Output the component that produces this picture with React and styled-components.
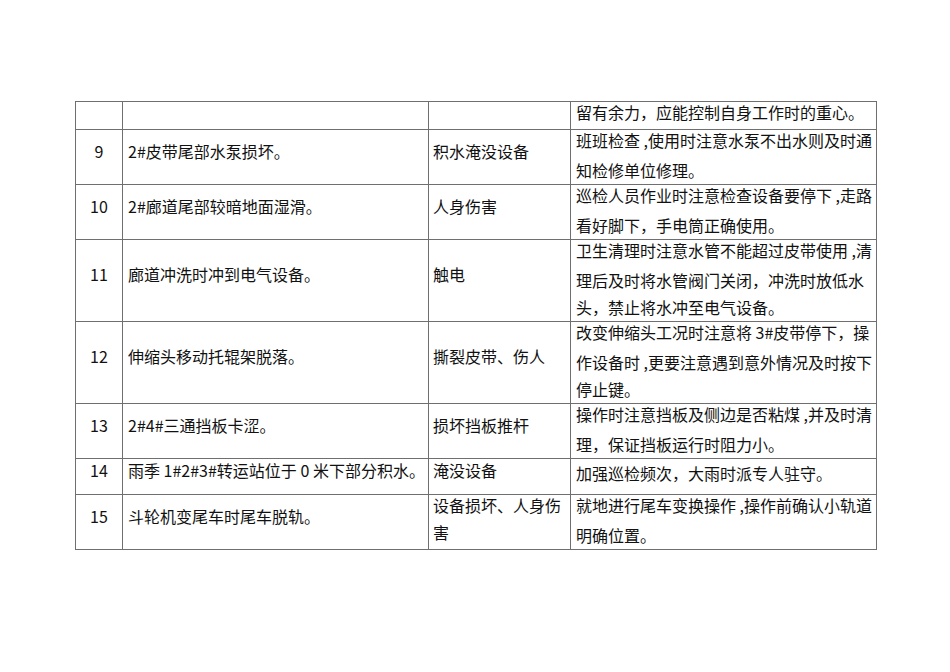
import styled, { createGlobalStyle } from "styled-components";

const GlobalStyle = createGlobalStyle`
    html, body {
        margin: 0;
        padding: 0;
        background: #fff;
    }
    body {
        font-family: "Noto Sans CJK SC", "Noto Sans", sans-serif;
        color: #111;
    }
`;

const Page = styled.div`
    width: 950px;
    height: 672px;
    padding: 101px 0 0 75px;
    box-sizing: border-box;
    background: #fff;
`;

const Table = styled.div`
    display: grid;
    grid-template-columns: 46px 305px 141px 305px;
    gap: 1px;
    padding: 1px;
    width: max-content;
    background: #6f6f6f;
`;

const Cell = styled.div`
    background: #fff;
    display: flex;
    flex-direction: column;
    justify-content: center;
    min-height: ${(p) => p.$minHeight || 0}px;
    padding: 0 ${(p) => (p.$num ? 0 : 2)}px 0 ${(p) => (p.$num ? 0 : p.$pad || 5)}px;
    align-items: ${(p) => (p.$num ? "center" : "stretch")};
`;

// glyphs sit a little high in the line, like the Word original
const Text = styled.div`
    font-size: 16px;
    line-height: 27px;
    white-space: nowrap;
    margin-top: -${(p) => p.$lift}px;
    padding-bottom: ${(p) => p.$lift}px;
`;

const rows = [
    { no: "", item: "", risk: [""], measure: ["留有余力，应能控制自身工作时的重心。"] },
    {
        no: "9",
        item: "2#皮带尾部水泵损坏。",
        risk: ["积水淹没设备"],
        measure: ["班班检查 ,使用时注意水泵不出水则及时通", "知检修单位修理。"],
    },
    {
        no: "10",
        item: "2#廊道尾部较暗地面湿滑。",
        risk: ["人身伤害"],
        measure: ["巡检人员作业时注意检查设备要停下 ,走路", "看好脚下，手电筒正确使用。"],
    },
    {
        no: "11",
        item: "廊道冲洗时冲到电气设备。",
        risk: ["触电"],
        measure: [
            "卫生清理时注意水管不能超过皮带使用 ,清",
            "理后及时将水管阀门关闭，冲洗时放低水",
            "头，禁止将水冲至电气设备。",
        ],
    },
    {
        no: "12",
        item: "伸缩头移动托辊架脱落。",
        risk: ["撕裂皮带、伤人"],
        measure: [
            "改变伸缩头工况时注意将 3#皮带停下，操",
            "作设备时 ,更要注意遇到意外情况及时按下",
            "停止键。",
        ],
    },
    {
        no: "13",
        item: "2#4#三通挡板卡涩。",
        risk: ["损坏挡板推杆"],
        measure: ["操作时注意挡板及侧边是否粘煤 ,并及时清", "理，保证挡板运行时阻力小。"],
    },
    {
        no: "14",
        item: "雨季 1#2#3#转运站位于 0 米下部分积水。",
        risk: ["淹没设备"],
        measure: ["加强巡检频次，大雨时派专人驻守。"],
        minHeight: 35,
    },
    {
        no: "15",
        item: "斗轮机变尾车时尾车脱轨。",
        risk: ["设备损坏、人身伤", "害"],
        measure: ["就地进行尾车变换操作 ,操作前确认小轨道", "明确位置。"],
    },
];

export default function App() {
    return (
        <Page>
            <GlobalStyle />
            <Table>
                {rows.map((r, i) => [
                    <Cell key={`n${i}`} $num $minHeight={r.minHeight}>
                        <Text $lift={6}>{r.no}</Text>
                    </Cell>,
                    <Cell key={`i${i}`} $pad={5} $minHeight={r.minHeight}>
                        <Text $lift={6}>{r.item}</Text>
                    </Cell>,
                    <Cell key={`r${i}`} $pad={4} $minHeight={r.minHeight}>
                        {r.risk.map((line, j) => (
                            <Text key={j} $lift={r.risk.length > 1 ? 3 : 6}>
                                {line}
                            </Text>
                        ))}
                    </Cell>,
                    <Cell key={`m${i}`} $pad={5} $minHeight={r.minHeight}>
                        <div>
                            {r.measure.map((line, j) => (
                                <Text key={j} $lift={j === 0 ? 3 : 0}>
                                    {line}
                                </Text>
                            ))}
                        </div>
                    </Cell>,
                ])}
            </Table>
        </Page>
    );
}
